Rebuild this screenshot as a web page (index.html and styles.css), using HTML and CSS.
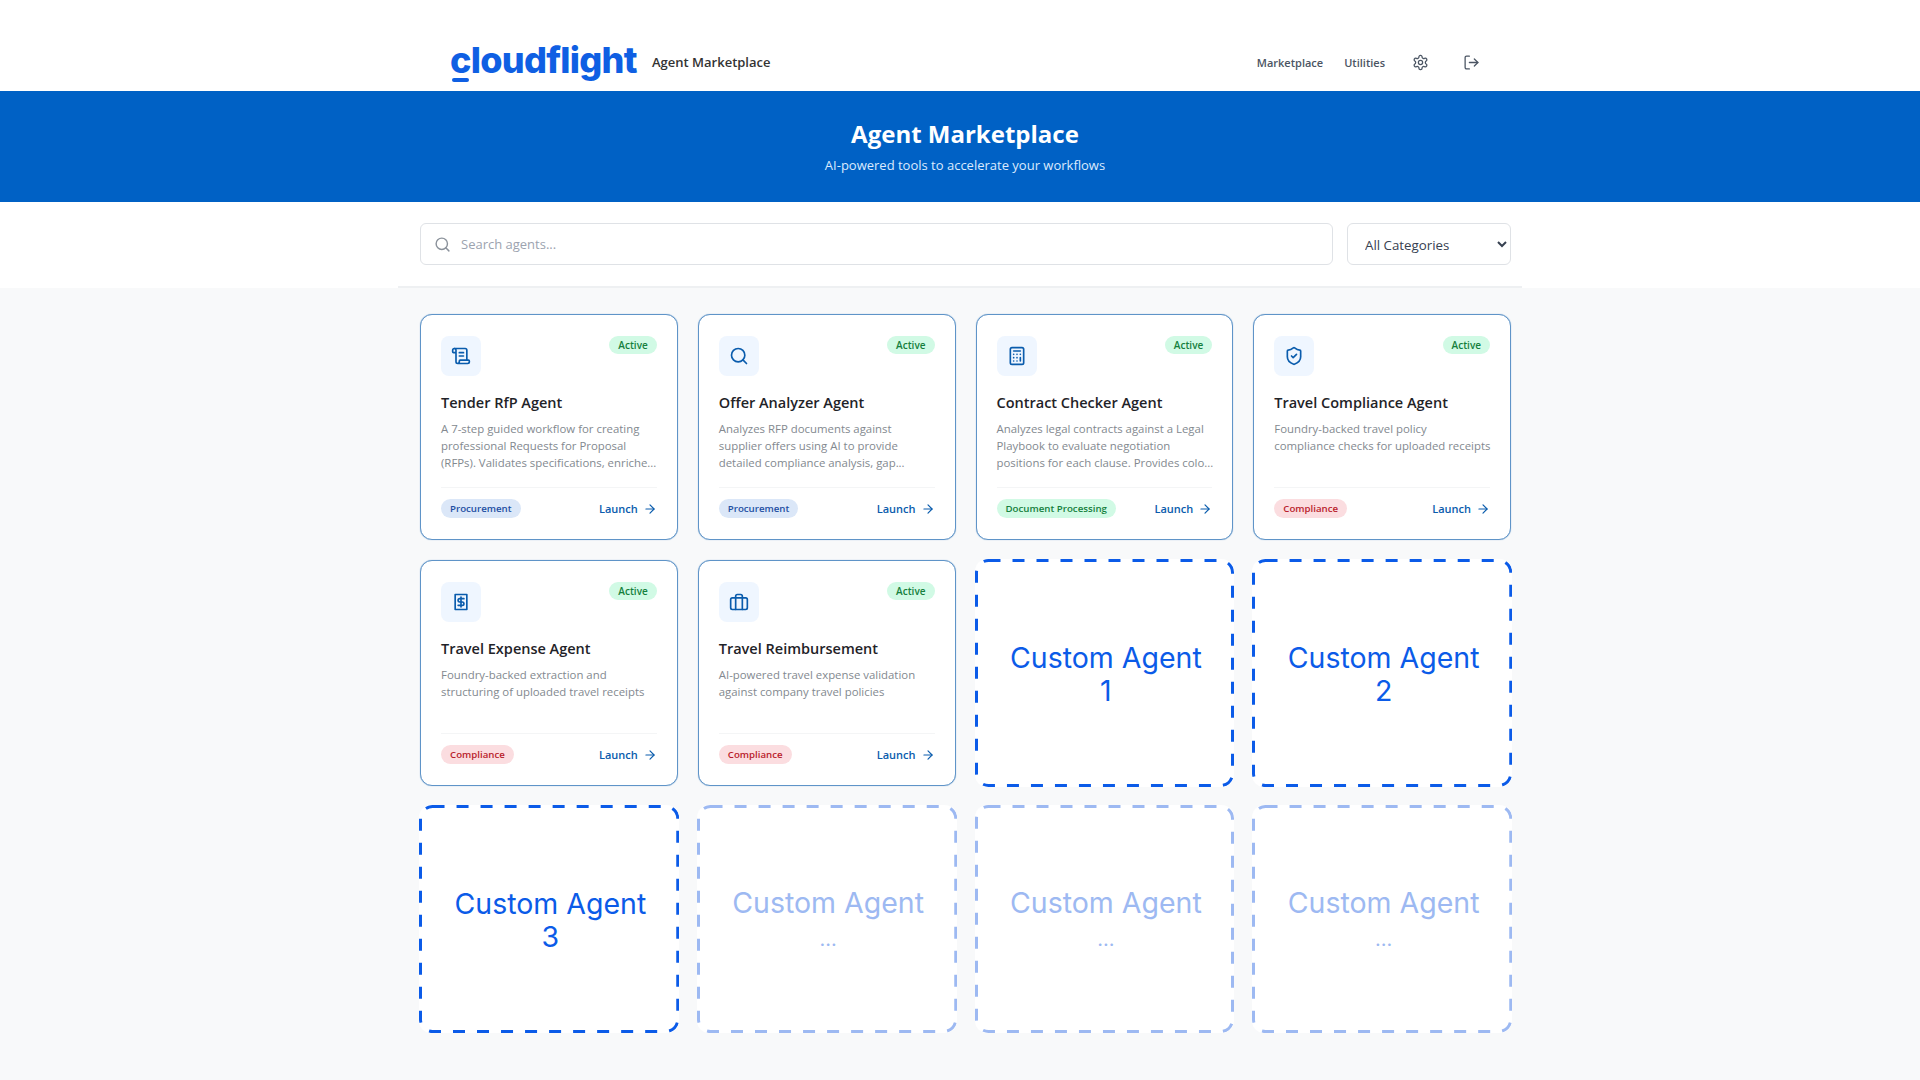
FILE: index.html
```html
<!DOCTYPE html>
<html lang="en">
<head>
    <meta charset="UTF-8">
    <meta name="viewport" content="width=device-width, initial-scale=1.0">
    <title>Agent Marketplace</title>
    <link rel="stylesheet" href="styles.css">
</head>
<body>
    <header class="topbar">
        <div class="wrap topbar-inner">
            <div class="brand">
                <span class="logo">cloudflight</span>
                <span class="brand-label">Agent Marketplace</span>
            </div>
            <nav class="nav">
                <a class="nav-link">Marketplace</a>
                <a class="nav-link">Utilities</a>
                <svg class="nav-icon nav-gear" viewBox="0 0 24 24"><path d="M12.22 2h-.44a2 2 0 0 0-2 2v.18a2 2 0 0 1-1 1.73l-.43.25a2 2 0 0 1-2 0l-.15-.08a2 2 0 0 0-2.73.73l-.22.38a2 2 0 0 0 .73 2.73l.15.1a2 2 0 0 1 1 1.72v.51a2 2 0 0 1-1 1.74l-.15.09a2 2 0 0 0-.73 2.73l.22.38a2 2 0 0 0 2.73.73l.15-.08a2 2 0 0 1 2 0l.43.25a2 2 0 0 1 1 1.73V20a2 2 0 0 0 2 2h.44a2 2 0 0 0 2-2v-.18a2 2 0 0 1 1-1.73l.43-.25a2 2 0 0 1 2 0l.15.08a2 2 0 0 0 2.73-.73l.22-.39a2 2 0 0 0-.73-2.73l-.15-.08a2 2 0 0 1-1-1.74v-.5a2 2 0 0 1 1-1.74l.15-.09a2 2 0 0 0 .73-2.73l-.22-.38a2 2 0 0 0-2.73-.73l-.15.08a2 2 0 0 1-2 0l-.43-.25a2 2 0 0 1-1-1.73V4a2 2 0 0 0-2-2z"/><circle cx="12" cy="12" r="3"/></svg>
                <svg class="nav-icon" viewBox="0 0 24 24"><path d="M9 21H5a2 2 0 0 1-2-2V5a2 2 0 0 1 2-2h4"/><path d="m16 17 5-5-5-5"/><path d="M21 12H9"/></svg>
            </nav>
        </div>
    </header>

    <section class="hero">
        <div class="wrap hero-inner">
            <h1>Agent Marketplace</h1>
            <p>AI-powered tools to accelerate your workflows</p>
        </div>
    </section>

    <section class="filters">
        <div class="filters-inner">
            <div class="search">
                <svg viewBox="0 0 24 24"><circle cx="11" cy="11" r="8"/><path d="m21 21-4.3-4.3"/></svg>
                <input type="text" placeholder="Search agents...">
            </div>
            <select class="category">
                <option>All Categories</option>
            </select>
        </div>
    </section>

    <main class="wrap">
        <div class="grid">
            <article class="card">
                <div class="card-top">
                    <div class="card-icon"><svg viewBox="0 0 24 24"><path d="M15 12h-5"/><path d="M15 8h-5"/><path d="M19 17V5a2 2 0 0 0-2-2H4"/><path d="M8 21h12a2 2 0 0 0 2-2v-1a1 1 0 0 0-1-1H11a1 1 0 0 0-1 1v1a2 2 0 1 1-4 0V5a2 2 0 1 0-4 0v2a1 1 0 0 0 1 1h3"/></svg></div>
                    <span class="status">Active</span>
                </div>
                <h3>Tender RfP Agent</h3>
                <p class="desc">A 7-step guided workflow for creating<br>professional Requests for Proposal<br>(RFPs). Validates specifications, enriche...</p>
                <div class="card-foot">
                    <span class="tag tag-blue">Procurement</span>
                    <a class="launch">Launch <svg viewBox="0 0 24 24"><path d="M5 12h14"/><path d="m12 5 7 7-7 7"/></svg></a>
                </div>
            </article>

            <article class="card">
                <div class="card-top">
                    <div class="card-icon"><svg viewBox="0 0 24 24"><circle cx="11" cy="11" r="8"/><path d="m21 21-4.3-4.3"/></svg></div>
                    <span class="status">Active</span>
                </div>
                <h3>Offer Analyzer Agent</h3>
                <p class="desc">Analyzes RFP documents against<br>supplier offers using AI to provide<br>detailed compliance analysis, gap...</p>
                <div class="card-foot">
                    <span class="tag tag-blue">Procurement</span>
                    <a class="launch">Launch <svg viewBox="0 0 24 24"><path d="M5 12h14"/><path d="m12 5 7 7-7 7"/></svg></a>
                </div>
            </article>

            <article class="card">
                <div class="card-top">
                    <div class="card-icon"><svg viewBox="0 0 24 24"><rect x="4" y="2" width="16" height="20" rx="2"/><path d="M8 6h8"/><path d="M16 14v4"/><path d="M16 10h.01"/><path d="M12 10h.01"/><path d="M8 10h.01"/><path d="M12 14h.01"/><path d="M8 14h.01"/><path d="M12 18h.01"/><path d="M8 18h.01"/></svg></div>
                    <span class="status">Active</span>
                </div>
                <h3>Contract Checker Agent</h3>
                <p class="desc">Analyzes legal contracts against a Legal<br>Playbook to evaluate negotiation<br>positions for each clause. Provides colo...</p>
                <div class="card-foot">
                    <span class="tag tag-green">Document Processing</span>
                    <a class="launch">Launch <svg viewBox="0 0 24 24"><path d="M5 12h14"/><path d="m12 5 7 7-7 7"/></svg></a>
                </div>
            </article>

            <article class="card">
                <div class="card-top">
                    <div class="card-icon"><svg viewBox="0 0 24 24"><path d="M20 13c0 5-3.5 7.5-7.66 8.95a1 1 0 0 1-.67-.01C7.5 20.5 4 18 4 13V6a1 1 0 0 1 1-1c2 0 4.5-1.2 6.24-2.72a1.17 1.17 0 0 1 1.52 0C14.51 3.81 17 5 19 5a1 1 0 0 1 1 1z"/><path d="m9 12 2 2 4-4"/></svg></div>
                    <span class="status">Active</span>
                </div>
                <h3>Travel Compliance Agent</h3>
                <p class="desc">Foundry-backed travel policy<br>compliance checks for uploaded receipts</p>
                <div class="card-foot">
                    <span class="tag tag-red">Compliance</span>
                    <a class="launch">Launch <svg viewBox="0 0 24 24"><path d="M5 12h14"/><path d="m12 5 7 7-7 7"/></svg></a>
                </div>
            </article>

            <article class="card">
                <div class="card-top">
                    <div class="card-icon"><svg viewBox="0 0 24 24"><rect x="5" y="3" width="14" height="18"/><path d="M15.5 8h-5a2 2 0 1 0 0 4h3a2 2 0 1 1 0 4h-5"/><path d="M12 18V6"/></svg></div>
                    <span class="status">Active</span>
                </div>
                <h3>Travel Expense Agent</h3>
                <p class="desc">Foundry-backed extraction and<br>structuring of uploaded travel receipts</p>
                <div class="card-foot">
                    <span class="tag tag-red">Compliance</span>
                    <a class="launch">Launch <svg viewBox="0 0 24 24"><path d="M5 12h14"/><path d="m12 5 7 7-7 7"/></svg></a>
                </div>
            </article>

            <article class="card">
                <div class="card-top">
                    <div class="card-icon"><svg viewBox="0 0 24 24"><rect x="2" y="7" width="20" height="14" rx="2"/><path d="M16 21V5a2 2 0 0 0-2-2h-4a2 2 0 0 0-2 2v16"/></svg></div>
                    <span class="status">Active</span>
                </div>
                <h3>Travel Reimbursement</h3>
                <p class="desc">AI-powered travel expense validation<br>against company travel policies</p>
                <div class="card-foot">
                    <span class="tag tag-red">Compliance</span>
                    <a class="launch">Launch <svg viewBox="0 0 24 24"><path d="M5 12h14"/><path d="m12 5 7 7-7 7"/></svg></a>
                </div>
            </article>

            <div class="slot"><div>Custom Agent<br>1</div></div>
            <div class="slot"><div>Custom Agent<br>2</div></div>
            <div class="slot"><div>Custom Agent<br>3</div></div>
            <div class="slot slot-faded"><div>Custom Agent<br><span class="slot-dots">...</span></div></div>
            <div class="slot slot-faded"><div>Custom Agent<br><span class="slot-dots">...</span></div></div>
            <div class="slot slot-faded"><div>Custom Agent<br><span class="slot-dots">...</span></div></div>
        </div>
    </main>
</body>
</html>
```

FILE: styles.css
```css
* {
    box-sizing: border-box;
}
body {
    margin: 0;
    min-height: 100vh;
    background-color: #f8f9fa;
    font-family: "Open Sans", "Noto Sans", sans-serif;
    color: #1f2328;
}
svg {
    fill: none;
    stroke: currentColor;
    stroke-width: 2;
    stroke-linecap: round;
    stroke-linejoin: round;
}
.wrap {
    width: 1100px;
    margin: 0 auto;
    padding-left: 10px;
}

/* top bar */
.topbar {
    background: #fff;
}
.topbar-inner {
    height: 91px;
    padding: 33px 30px 0 10px;
    display: flex;
    align-items: center;
    justify-content: space-between;
}
.brand {
    display: flex;
    align-items: center;
    margin-left: 30px;
}
.logo {
    position: relative;
    width: 202px;
    margin-bottom: 5px;
    font-family: Inter, sans-serif;
    font-weight: 800;
    font-size: 36px;
    line-height: 44px;
    letter-spacing: -0.7px;
    color: #0f5fe3;
}
.logo::after {
    content: "";
    position: absolute;
    left: 2px;
    bottom: 0;
    width: 17px;
    height: 4px;
    border-radius: 2px;
    background: #0f5fe3;
}
.brand-label {
    font-size: 13px;
    font-weight: 600;
    color: #333;
}
.nav {
    display: flex;
    align-items: center;
}
.nav-link {
    font-size: 11px;
    font-weight: 600;
    color: #4b5563;
    margin-right: 21px;
}
.nav-icon {
    width: 17px;
    height: 17px;
    color: #4b5563;
    stroke-width: 1.8;
}
.nav-gear {
    margin: 0 34px 0 6px;
}

/* blue banner */
.hero {
    background: #0061c5;
    color: #fff;
}
.hero-inner {
    height: 111px;
    text-align: center;
    padding-top: 27px;
}
.hero h1 {
    margin: 0;
    font-size: 24px;
    line-height: 32px;
    font-weight: 700;
}
.hero p {
    margin: 5px 0 0;
    font-size: 13px;
    line-height: 20px;
    color: #dbeafe;
}

/* search row */
.filters {
    background: #fff;
}
.filters-inner {
    width: 1124px;
    height: 86px;
    margin: 0 auto;
    padding: 21px 11px 0 22px;
    display: flex;
    gap: 14px;
    align-items: flex-start;
    border-bottom: 2px solid #eef0f2;
}
.search {
    flex: 1;
    height: 42px;
    display: flex;
    align-items: center;
    gap: 10px;
    padding: 0 12px 0 13px;
    background: #fff;
    border: 1px solid #dfe2e6;
    border-radius: 6px;
}
.search svg {
    width: 17px;
    height: 17px;
    color: #8b929b;
}
.search input {
    flex: 1;
    border: none;
    outline: none;
    padding: 0;
    font-family: inherit;
    font-size: 13px;
}
.search input::placeholder {
    color: #9ca3af;
}
.category {
    width: 164px;
    height: 42px;
    padding: 2px 0 0 13px;
    background: #fff;
    border: 1px solid #dfe2e6;
    border-radius: 6px;
    font-family: inherit;
    font-size: 13.3px;
    color: #374151;
}

/* agent cards */
.grid {
    display: grid;
    grid-template-columns: repeat(4, minmax(0, 1fr));
    grid-auto-rows: 226px;
    gap: 20px;
    margin-right: -1px;
    padding-top: 26px;
}
.card {
    display: flex;
    flex-direction: column;
    padding: 21px 20px 21px;
    background: #fff;
    border: 1px solid #5f94c8;
    border-radius: 12px;
    box-shadow: 0 0 1px #7ba6cf;
}
.card-top {
    display: flex;
    justify-content: space-between;
    align-items: flex-start;
}
.card-icon {
    width: 40px;
    height: 40px;
    display: flex;
    align-items: center;
    justify-content: center;
    background: #eff6ff;
    border-radius: 8px;
    color: #0a5cad;
}
.card-icon svg {
    width: 20px;
    height: 20px;
}
.status {
    padding: 0 9px;
    height: 18px;
    font-size: 10px;
    font-weight: 600;
    line-height: 18px;
    color: #15803d;
    background: #d1fae5;
    border-radius: 9px;
}
.card h3 {
    margin: 16px 0 0;
    font-size: 14.5px;
    line-height: 22px;
    font-weight: 600;
    color: #1f2328;
}
.desc {
    margin: 5.5px 0 0;
    font-size: 11.4px;
    line-height: 17px;
    white-space: nowrap;
    color: #83898f;
}
.card-foot {
    margin-top: auto;
    padding-top: 11px;
    display: flex;
    justify-content: space-between;
    align-items: center;
    border-top: 1px solid #f4f5f6;
}
.tag {
    height: 19px;
    padding: 0 9px;
    font-size: 9.7px;
    font-weight: 600;
    line-height: 19px;
    border-radius: 10px;
}
.tag-blue {
    background: #dbe7f8;
    color: #1e4fa3;
}
.tag-green {
    background: #d1fae5;
    color: #15803d;
}
.tag-red {
    background: #fbdde0;
    color: #b91c2c;
}
.launch {
    display: flex;
    align-items: center;
    gap: 5px;
    font-size: 11px;
    font-weight: 600;
    color: #0a5cad;
}
.launch svg {
    width: 14px;
    height: 14px;
}

/* empty slots */
.slot {
    margin: -1px;
    display: flex;
    align-items: center;
    justify-content: center;
    text-align: center;
    background-color: #fff;
    background-image: url("data:image/svg+xml,%3Csvg xmlns='http://www.w3.org/2000/svg' width='100%25' height='100%25'%3E%3Crect x='1.5' y='1.5' width='calc(100%25 - 3px)' height='calc(100%25 - 3px)' rx='12' fill='none' stroke='%230b5be8' stroke-width='3' stroke-dasharray='12 12'/%3E%3C/svg%3E");
    border-radius: 12px;
    font-family: Inter, sans-serif;
    font-size: 28.5px;
    line-height: 33px;
    color: #0b5be8;
    padding: 2px 0 0 3px;
}
.slot-faded {
    background-image: url("data:image/svg+xml,%3Csvg xmlns='http://www.w3.org/2000/svg' width='100%25' height='100%25'%3E%3Crect x='1.5' y='1.5' width='calc(100%25 - 3px)' height='calc(100%25 - 3px)' rx='12' fill='none' stroke='%239db9f2' stroke-width='3' stroke-dasharray='12 12'/%3E%3C/svg%3E");
    color: #9db9f2;
    padding-top: 4px;
}
.slot-dots {
    font-size: 20px;
}
```
